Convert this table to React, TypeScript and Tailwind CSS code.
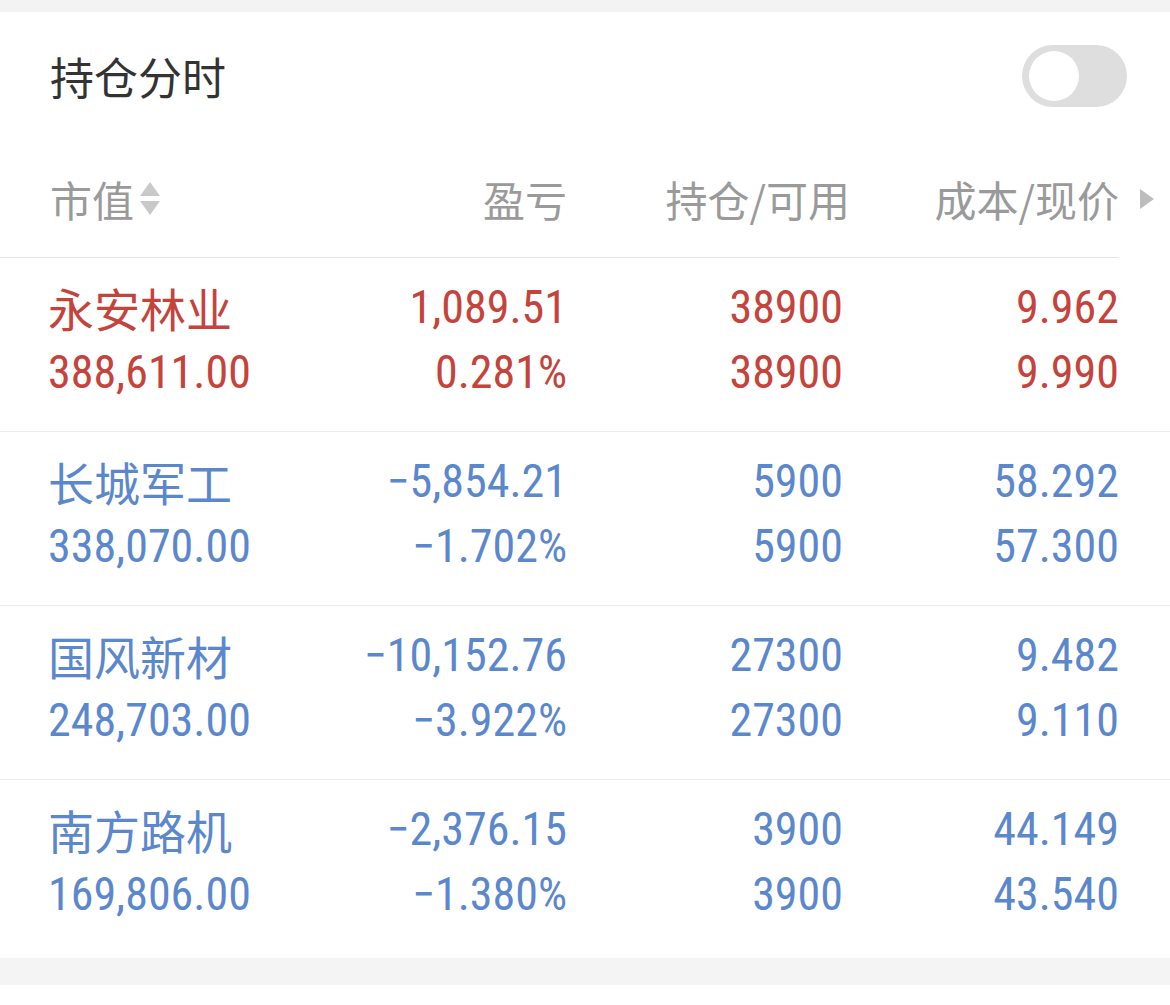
import React from "react";

type Row = {
  name: string;
  value: string;
  pl: string;
  pct: string;
  hold: string;
  avail: string;
  cost: string;
  price: string;
  up: boolean;
};

const rows: Row[] = [
  { name: "永安林业", value: "388,611.00", pl: "1,089.51", pct: "0.281%", hold: "38900", avail: "38900", cost: "9.962", price: "9.990", up: true },
  { name: "长城军工", value: "338,070.00", pl: "−5,854.21", pct: "−1.702%", hold: "5900", avail: "5900", cost: "58.292", price: "57.300", up: false },
  { name: "国风新材", value: "248,703.00", pl: "−10,152.76", pct: "−3.922%", hold: "27300", avail: "27300", cost: "9.482", price: "9.110", up: false },
  { name: "南方路机", value: "169,806.00", pl: "−2,376.15", pct: "−1.380%", hold: "3900", avail: "3900", cost: "44.149", price: "43.540", up: false },
];

const NUM = "font-['Roboto_Condensed','Roboto','Noto_Sans_CJK_SC',sans-serif] text-[46px] font-normal";
const CJK = "font-['Noto_Sans_CJK_SC',sans-serif]";

function DataRow({ r, last }: { r: Row; last?: boolean }) {
  const color = r.up ? "text-[#c5433b]" : "text-[#5b87cd]";
  return (
    <div className={`flex pl-[48px] pr-[51px] pt-[17px] ${last ? "pb-[31px]" : "pb-[26px] border-b border-[#ececec]"} ${color}`}>
      <div className="flex-1 flex flex-col">
        <div className={`${CJK} text-[46px] leading-[65px]`}>{r.name}</div>
        <div className={`${NUM} leading-[65px]`}>{r.value}</div>
      </div>
      <div className="w-[270px] flex flex-col items-end">
        <div className={`${NUM} leading-[65px]`}>{r.pl}</div>
        <div className={`${NUM} leading-[65px]`}>{r.pct}</div>
      </div>
      <div className="w-[276px] flex flex-col items-end">
        <div className={`${NUM} leading-[65px]`}>{r.hold}</div>
        <div className={`${NUM} leading-[65px]`}>{r.avail}</div>
      </div>
      <div className="w-[276px] flex flex-col items-end">
        <div className={`${NUM} leading-[65px]`}>{r.cost}</div>
        <div className={`${NUM} leading-[65px]`}>{r.price}</div>
      </div>
    </div>
  );
}

export default function App() {
  return (
    <div className="w-[1170px] h-[1005px] bg-white overflow-hidden">
      <div className="h-[12px] bg-[#f3f3f3]" />
      <div className="bg-white">
        {/* Title */}
        <div className="h-[128px] flex items-center justify-between pl-[50px] pr-[43px]">
          <div className={`${CJK} text-[44px] text-[#333333]`}>持仓分时</div>
          <div className="w-[105px] h-[62px] rounded-full bg-[#dedede] flex items-center pl-[7px]">
            <div className="w-[50px] h-[50px] rounded-full bg-white" />
          </div>
        </div>
        {/* Table header */}
        <div className="flex items-center">
          <div className="flex-1 flex items-center h-[118px] border-b border-[#e6e6e6] pl-[50px] text-[#9a9a9a]">
            <div className="flex-1 flex items-center">
              <span className={`${CJK} text-[42px]`}>市值</span>
              <svg width="22" height="34" viewBox="0 0 22 34" className="ml-[5px]">
                <polygon points="11,0 21,14 1,14" fill="#c9c9c9" />
                <polygon points="1,19 21,19 11,33" fill="#c9c9c9" />
              </svg>
            </div>
            <div className="w-[270px] flex justify-end">
              <span className={`${CJK} text-[42px]`}>盈亏</span>
            </div>
            <div className="w-[276px] flex justify-end">
              <span className={`${CJK} text-[42px] mr-[-7px]`}>持仓/可用</span>
            </div>
            <div className="w-[276px] flex justify-end">
              <span className={`${CJK} text-[42px]`}>成本/现价</span>
            </div>
          </div>
          <div className="w-[51px] h-[118px] flex items-center pl-[21px]">
            <svg width="14" height="20" viewBox="0 0 14 20">
              <polygon points="0,0 14,10 0,20" fill="#bdbdbd" />
            </svg>
          </div>
        </div>
        {rows.map((r, i) => (
          <DataRow key={r.name} r={r} last={i === rows.length - 1} />
        ))}
      </div>
      <div className="h-[27px] bg-[#f4f4f4]" />
      <div className="h-[20px] bg-white" />
    </div>
  );
}
